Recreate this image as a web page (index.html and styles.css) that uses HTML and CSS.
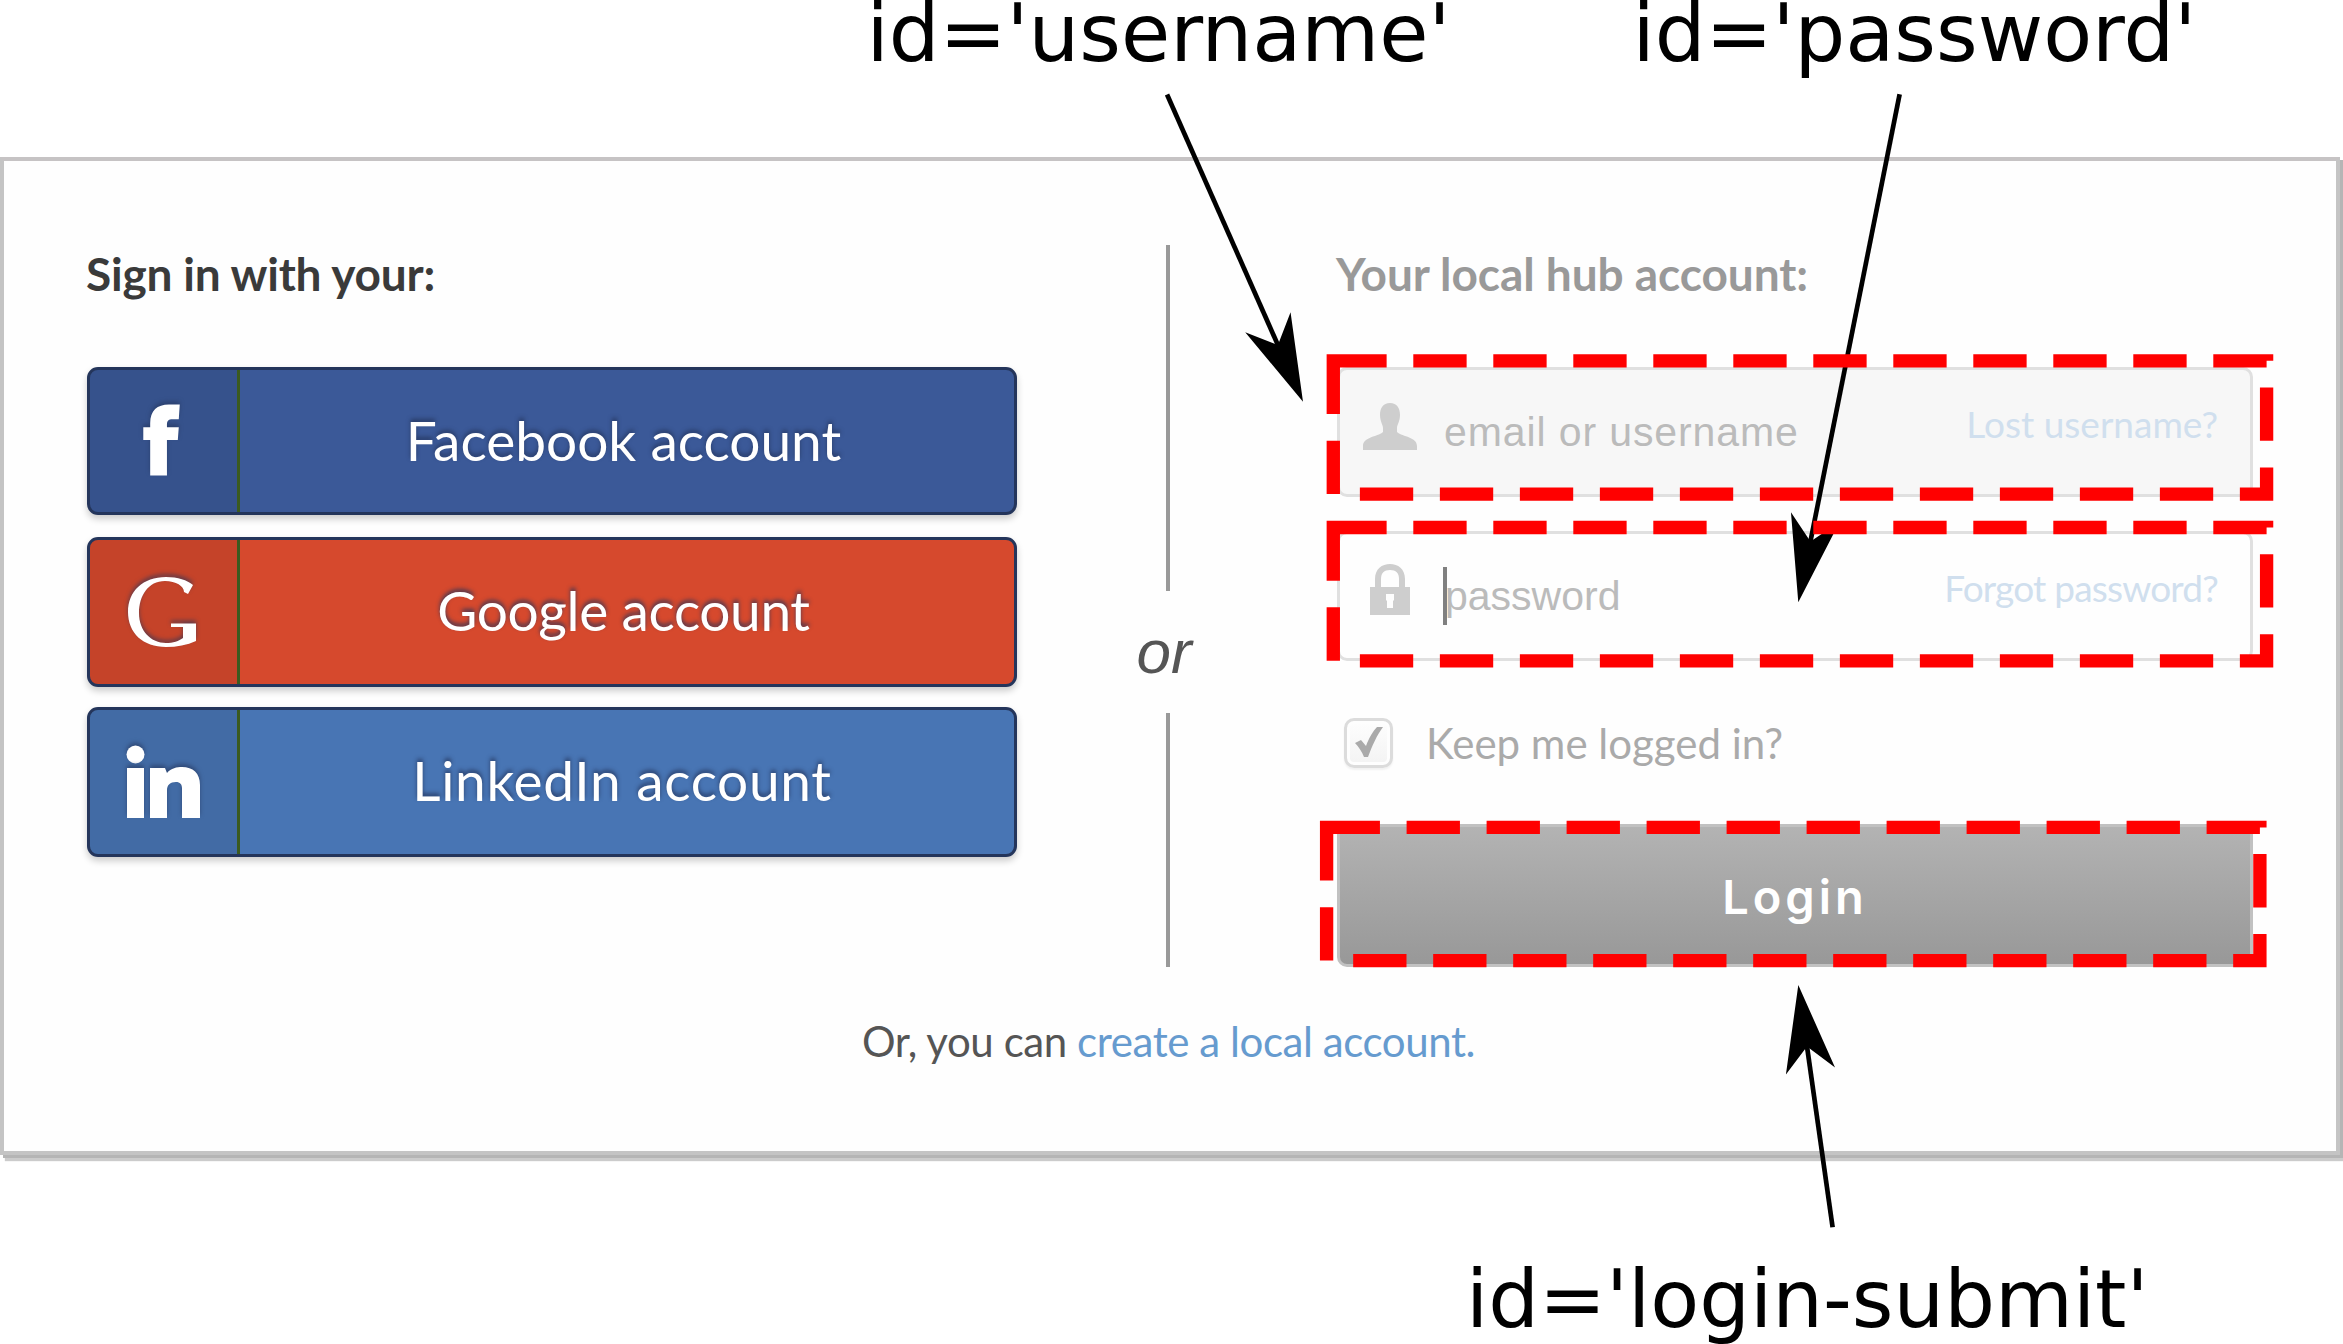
FILE: index.html
```html
<!DOCTYPE html>
<html lang="en">
<head>
<meta charset="utf-8">
<title>Sign in</title>
<link rel="stylesheet" href="styles.css">
</head>
<body>
<main class="card">
  <div class="columns">
    <section class="providers">
      <h2 class="heading">Sign in with your:</h2>
      <a class="provider provider-facebook">
        <svg class="provider-icon" viewBox="0 0 147 144"><path d="M60 107V71H53V58H60V54C60 41 67 35 79 35H90L89 50H83C78 50 77 52 77 56V58H89L88 71H77V107Z"/></svg>
        <span class="provider-name">Facebook account</span>
      </a>
      <a class="provider provider-google">
        <svg class="provider-icon" viewBox="0 0 147 144"><path d="M103 45L98 54L94 52C94 46 86 41 75 41C58 41 49 56 49 73C49 91 61 103 76 103C83 103 89 101 93 98V87H81V83.5H106V101C97 105 87 107 76 107C53 107 38 93 38 72C38 51 53 37 76 37C88 37 97 40 103 45Z"/></svg>
        <span class="provider-name">Google account</span>
      </a>
      <a class="provider provider-linkedin">
        <svg class="provider-icon" viewBox="0 0 147 144"><circle cx="45.5" cy="44.5" r="9"/><path d="M37 58H54V108H37ZM60 58H75L77 63C81 58 87 57 92 57C103 57 110 63 110 75V108H92V79C92 74 90 72 86 72C80 72 77 75 77 80V108H60Z"/></svg>
        <span class="provider-name">LinkedIn account</span>
      </a>
    </section>

    <div class="separator">
      <span class="rule rule-top"></span>
      <em class="or">or</em>
      <span class="rule rule-bottom"></span>
    </div>

    <section class="local">
      <h2 class="heading heading-muted">Your local hub account:</h2>
      <div class="field field-filled">
        <span class="field-icon"><svg width="54" height="47" viewBox="0 0 54 47"><path d="M27 0C34 0 37 5 37 12C37 18 34 22 34 25V29C40 34 54 34 54 43V47H0V43C0 34 14 34 20 29V25C20 22 17 18 17 12C17 5 20 0 27 0Z"/></svg></span>
        <span class="placeholder placeholder-username">email or username</span>
        <a class="hint">Lost username?</a>
      </div>
      <div class="field">
        <span class="field-icon"><svg width="40" height="51" viewBox="0 0 40 51"><path fill-rule="evenodd" d="M0 23H5V15C5 5 12 0 20 0C28 0 35 5 35 15V23H40V51H0ZM11 23H29V15C29 9 26 6 20 6C14 6 11 9 11 15ZM16 30V36L17 37V44H23V37L24 36V30Z"/></svg></span>
        <span class="caret"></span>
        <span class="placeholder">password</span>
        <a class="hint hint-password">Forgot password?</a>
      </div>
      <div class="remember">
        <span class="checkbox"><svg width="28" height="31" viewBox="0 0 28 31"><path d="M0 16L6 13L11 19C14 11 18 4 22 0H28C22 8 17 19 13 30H9C7 25 4 20 0 16Z"/></svg></span>
        <span class="remember-label">Keep me logged in?</span>
      </div>
      <div class="login">Login</div>
    </section>
  </div>
  <p class="create">Or, you can <a class="create-link">create a local account.</a></p>
</main>

<svg class="annotations" width="2343" height="1344" viewBox="0 0 2343 1344">
  <defs>
    <path id="arrowhead" d="M0 0L-86.8 24.8L-62 0L-86.8 -24.8Z"/>
  </defs>
  <g transform="translate(1303 401.7) rotate(66.13)"><path class="shaft" d="M-336 0H-60"/><use href="#arrowhead"/></g>
  <g transform="translate(1798.3 602.3) rotate(101.28)"><path class="shaft" d="M-518 0H-60"/><use href="#arrowhead"/></g>
  <g transform="translate(1798.3 985) rotate(-98.06)"><path class="shaft" d="M-244.7 0H-60"/><use href="#arrowhead"/></g>
  <rect class="outline" x="1333.3" y="360.8" width="933.3" height="133.3"/>
  <rect class="outline" x="1333.3" y="527.5" width="933.3" height="133.3"/>
  <rect class="outline" x="1326.6" y="827.4" width="933.3" height="133.3"/>
  <text class="note" x="866.5" y="61">id='username'</text>
  <text class="note" x="1632.5" y="61">id='password'</text>
  <text class="note" x="1466" y="1327.3">id='login-submit'</text>
</svg>
</body>
</html>
```

FILE: styles.css
```css
* { box-sizing: border-box; }

body {
  margin: 0;
  height: 1344px;
  padding-top: 157px;
  position: relative;
  overflow: hidden;
  background: #fff;
  font-family: Lato, sans-serif;
}

.card {
  width: 2340px;
  height: 998px;
  padding: 84px 83px 0;
  border: 4px solid #c4c4c4;
  border-top-color: #c6c3c4;
  background: #fefefe;
  box-shadow: 3px 3px 0 #b5b5b5, 5px 6px 1px #cbcbcb;
}

.columns {
  display: grid;
  grid-template-columns: 930px 320px 916px;
  height: 722px;
}

.heading {
  margin: 0 0 65px -1px;
  padding-top: 1px;
  font-size: 46px;
  font-weight: 700;
  line-height: 56px;
  letter-spacing: -0.2px;
  color: #3a3a3a;
}

.heading-muted {
  letter-spacing: -0.05px;
  color: #999;
}

.provider {
  display: flex;
  height: 150px;
  margin-bottom: 20px;
  border: 3px solid #24355b;
  border-radius: 11px;
  overflow: hidden;
  box-shadow: 0 4px 7px rgba(0, 0, 0, 0.2);
  color: #fff;
  text-shadow: 0 -3px 4px rgba(36, 53, 91, 0.8);
}

.provider-facebook { height: 148px; margin-bottom: 22px; background: #3b5998; }
.provider-google { background: #d6492d; }
.provider-linkedin { background: #4875b4; }

.provider-icon {
  width: 150px;
  height: 100%;
  border-right: 3px solid #3b5a1f;
  background: rgba(0, 0, 0, 0.08);
  fill: #fff;
}

.provider-icon path,
.provider-icon circle { filter: drop-shadow(0 -3px 2px rgba(36, 53, 91, 0.6)); }

.provider-name {
  flex: 1;
  padding-right: 7px;
  text-align: center;
  font-size: 55px;
  line-height: 140px;
}

.provider-google .provider-name { letter-spacing: -0.37px; }
.provider-linkedin .provider-name { padding-right: 10px; letter-spacing: 0.69px; }

.separator {
  display: flex;
  flex-direction: column;
  align-items: center;
  padding-right: 18px;
}

.rule { width: 4px; background: #999; }
.rule-top { flex: 0 0 346px; }
.rule-bottom { flex: 1; }

.or {
  flex: 0 0 120px;
  padding-right: 8px;
  font: italic 62px/122px "Liberation Sans", sans-serif;
  color: #555;
}

.field {
  display: flex;
  align-items: center;
  height: 130px;
  margin-bottom: 34px;
  padding: 0 32px 0 20px;
  border: 3px solid #e0e0e0;
  border-radius: 10px;
}

.field-filled { background: #f7f7f7; }

.field-icon {
  display: flex;
  justify-content: center;
  width: 60px;
  margin-right: 24px;
  padding-bottom: 13px;
  fill: #cecece;
}

.field-filled .field-icon { padding-bottom: 12px; }

.caret {
  width: 4px;
  height: 58px;
  margin: 0 -2px 0 -1px;
  background: #808080;
}

.placeholder {
  flex: 1;
  padding-top: 1px;
  font: 41px "Liberation Sans", sans-serif;
  color: #bbb;
}

.placeholder-username { letter-spacing: 0.89px; }

.hint {
  padding-bottom: 17px;
  font-size: 37px;
  font-weight: 400;
  line-height: 44px;
  color: #d0dfee;
}

.hint-password { letter-spacing: -0.8px; }

.remember {
  display: flex;
  align-items: center;
  height: 51px;
  margin: 56px 0 56px 7px;
}

.checkbox {
  display: flex;
  align-items: center;
  justify-content: center;
  width: 49px;
  height: 50px;
  border: 3px solid #dcdcdc;
  border-radius: 10px;
  background: linear-gradient(#fefefe, #f3f3f3);
  box-shadow: inset 0 0 0 3px #fefefe, 0 2px 2px rgba(0, 0, 0, 0.05);
  fill: #aaa;
}

.remember-label {
  margin-left: 33px;
  font-size: 42px;
  line-height: 50px;
  color: #aaa;
}

.login {
  height: 143px;
  border: 3px solid #c1c1c1;
  border-radius: 10px;
  background: linear-gradient(#b3b3b3, #989898);
  color: #fff;
  text-align: center;
  font: 600 47px/140px Inter, sans-serif;
  letter-spacing: 4px;
}

.create {
  margin: 49px 0 0;
  padding-right: 3px;
  text-align: center;
  font-size: 42px;
  line-height: 50px;
  letter-spacing: -0.42px;
  color: #555;
}

.create-link { color: #669bcf; }

.annotations {
  position: absolute;
  top: 0;
  left: 0;
}

.shaft {
  stroke: #000;
  stroke-width: 4.7;
}

.outline {
  fill: none;
  stroke: #f00;
  stroke-width: 13.33;
  stroke-dasharray: 53.33 26.67;
}

.note { font: 80px "DejaVu Sans", sans-serif; }
```
